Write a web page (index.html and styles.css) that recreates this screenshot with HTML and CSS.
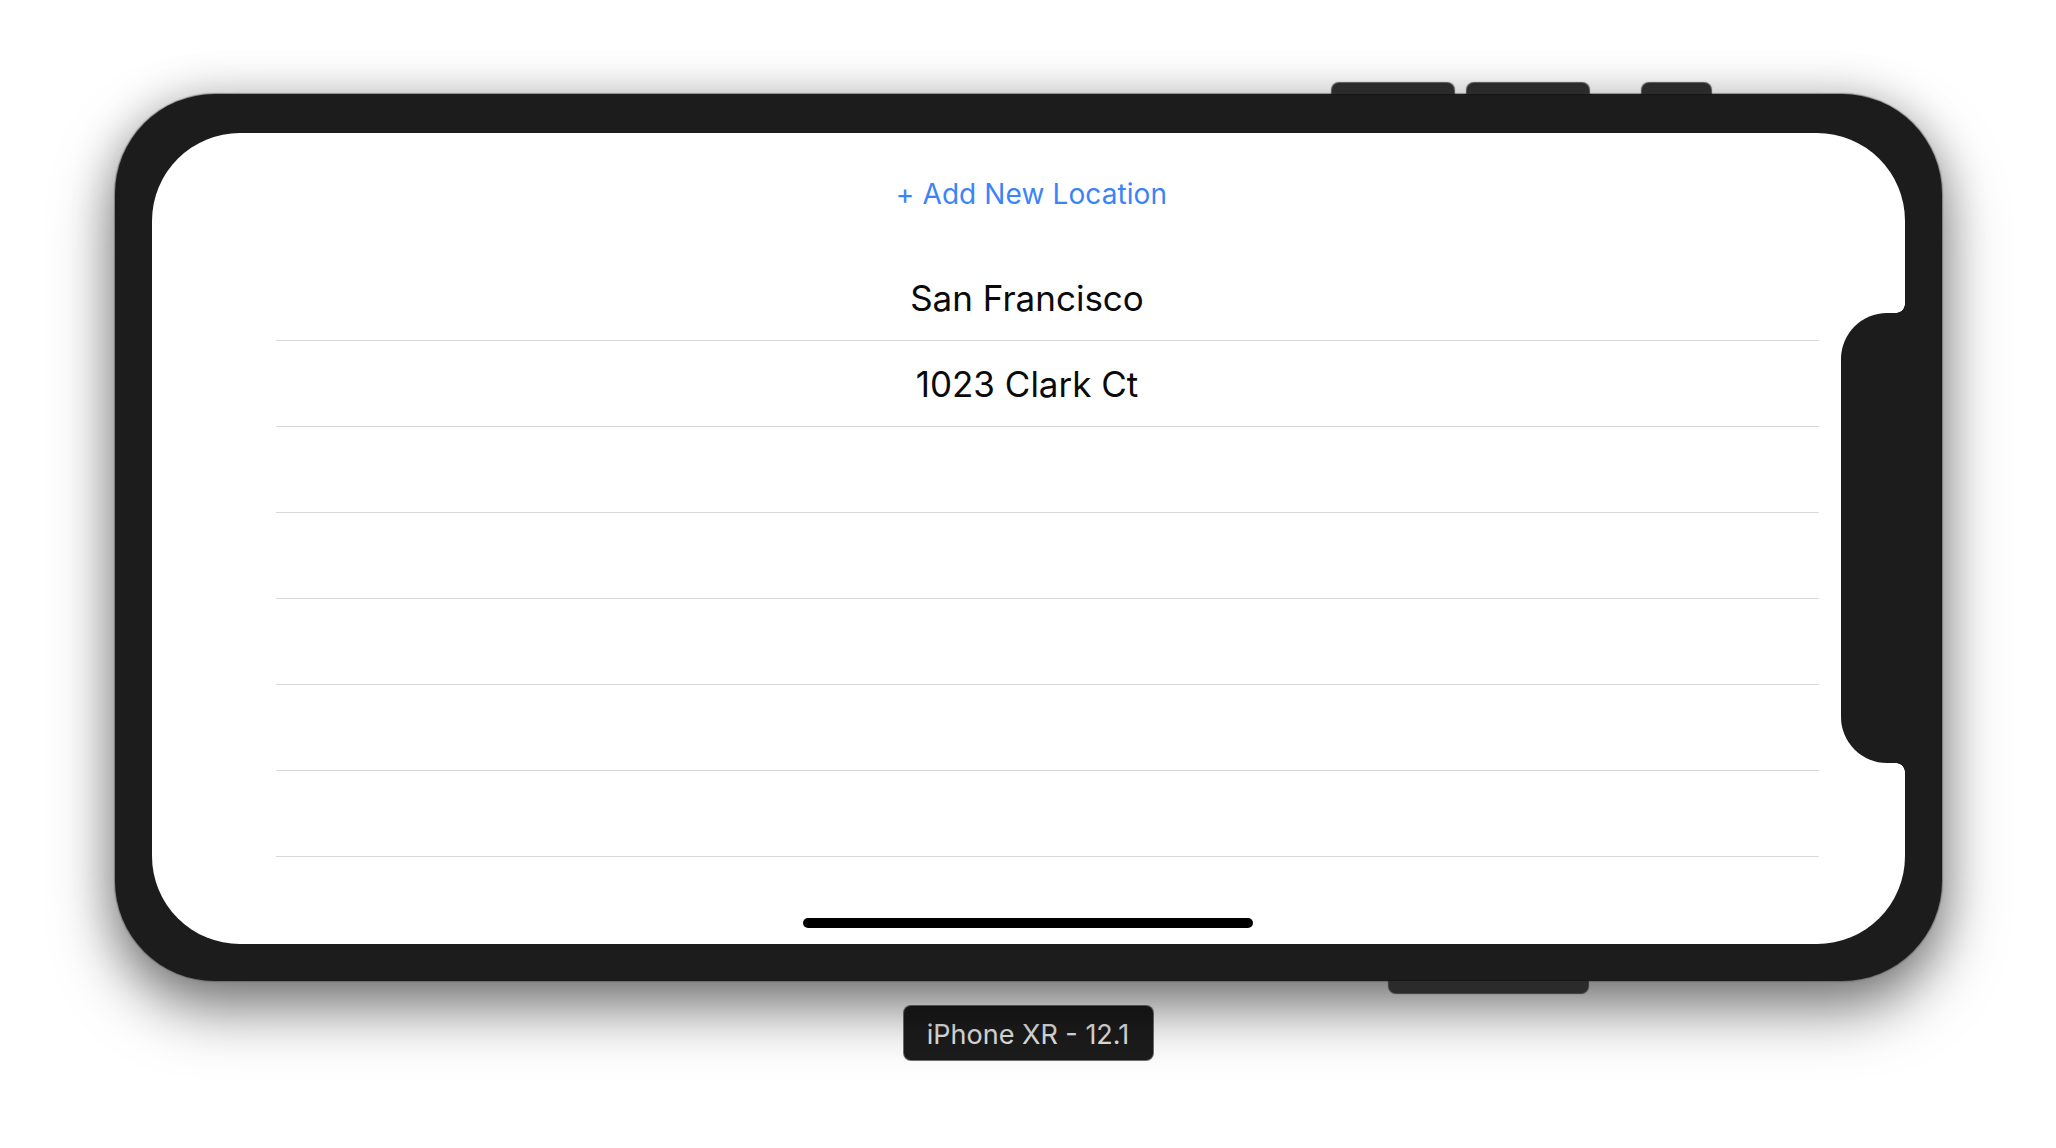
FILE: index.html
```html
<!DOCTYPE html>
<html>
<head>
<meta charset="utf-8">
<link rel="stylesheet" href="styles.css">
</head>
<body>
<div class="stage">
  <div class="phone">
    <span class="btn btn-top btn-a"></span>
    <span class="btn btn-top btn-b"></span>
    <span class="btn btn-top btn-c"></span>
    <span class="btn btn-bottom"></span>
    <div class="screen">
      <div class="header">
        <span class="add-link">+ Add New Location</span>
      </div>
      <div class="list">
        <div class="row">San Francisco</div>
        <div class="row">1023 Clark Ct</div>
        <div class="row"></div>
        <div class="row"></div>
        <div class="row"></div>
        <div class="row"></div>
        <div class="row"></div>
      </div>
      <div class="notch"></div>
      <div class="home-indicator"></div>
    </div>
  </div>
  <div class="device-label">iPhone XR - 12.1</div>
</div>
</body>
</html>
```
FILE: styles.css
```css
html, body {
  margin: 0;
  padding: 0;
  background: #ffffff;
}

.stage {
  width: 2056px;
  height: 1148px;
  display: flex;
  flex-direction: column;
  align-items: center;
  padding-top: 94px;
  box-sizing: border-box;
  font-family: Inter, "Noto Sans", "Liberation Sans", sans-serif;
}

.phone {
  position: relative;
  width: 1827px;
  height: 887px;
  box-sizing: border-box;
  padding: 39px 37px 37px 37px;
  background: #1c1c1c;
  border-radius: 100px;
  box-shadow: 0 0 1px 1px rgba(90, 90, 90, 0.6),
              0 28px 60px rgba(0, 0, 0, 0.5),
              0 0 45px rgba(0, 0, 0, 0.18);
}

.btn {
  position: absolute;
  background: #2b2b2b;
  box-shadow: 0 0 1px 1px rgba(20, 20, 20, 0.7);
}

.btn-top {
  top: -11px;
  height: 11px;
  border-radius: 7px 7px 0 0;
}

.btn-a { left: 1217px; width: 122px; }
.btn-b { left: 1352px; width: 122px; }
.btn-c { left: 1527px; width: 69px; }

.btn-bottom {
  left: 1274px;
  width: 199px;
  bottom: -12px;
  height: 12px;
  border-radius: 0 0 7px 7px;
}

.screen {
  position: relative;
  width: 100%;
  height: 100%;
  background: #ffffff;
  border-radius: 88px;
  overflow: hidden;
  display: flex;
  flex-direction: column;
}

.header {
  height: 122px;
  box-sizing: border-box;
  display: flex;
  align-items: center;
  justify-content: center;
  flex-shrink: 0;
}

.add-link {
  color: #3b84f7;
  font-size: 28px;
  letter-spacing: 0.1px;
  padding-left: 7px;
}

.list {
  display: flex;
  flex-direction: column;
}

.row {
  height: 86px;
  box-sizing: border-box;
  margin: 0 86px 0 124px;
  padding-right: 40px;
  border-bottom: 1px solid #d8d8d8;
  display: flex;
  align-items: center;
  justify-content: center;
  font-size: 35px;
  color: #0a0a0a;
  padding-top: 1px;
}

.notch {
  position: absolute;
  right: 0;
  top: 180px;
  width: 64px;
  height: 450px;
  background: #1c1c1c;
  border-radius: 46px 0 0 46px;
}

.notch::before,
.notch::after {
  content: "";
  position: absolute;
  right: 0;
  width: 9px;
  height: 9px;
}

.notch::before {
  top: -9px;
  background: radial-gradient(circle at 0 0, transparent 8.5px, #1c1c1c 9px);
}

.notch::after {
  bottom: -9px;
  background: radial-gradient(circle at 0 100%, transparent 8.5px, #1c1c1c 9px);
}

.home-indicator {
  position: absolute;
  left: 651px;
  bottom: 16px;
  width: 450px;
  height: 10px;
  border-radius: 5px;
  background: #000000;
}

.device-label {
  margin-top: 24px;
  width: 251px;
  height: 56px;
  box-sizing: border-box;
  border-radius: 8px;
  background: #1c1c1c;
  border: 1px solid rgba(170, 170, 170, 0.6);
  color: #e4e4e4;
  font-size: 27px;
  display: flex;
  align-items: center;
  justify-content: center;
  padding-top: 2px;
}
```
